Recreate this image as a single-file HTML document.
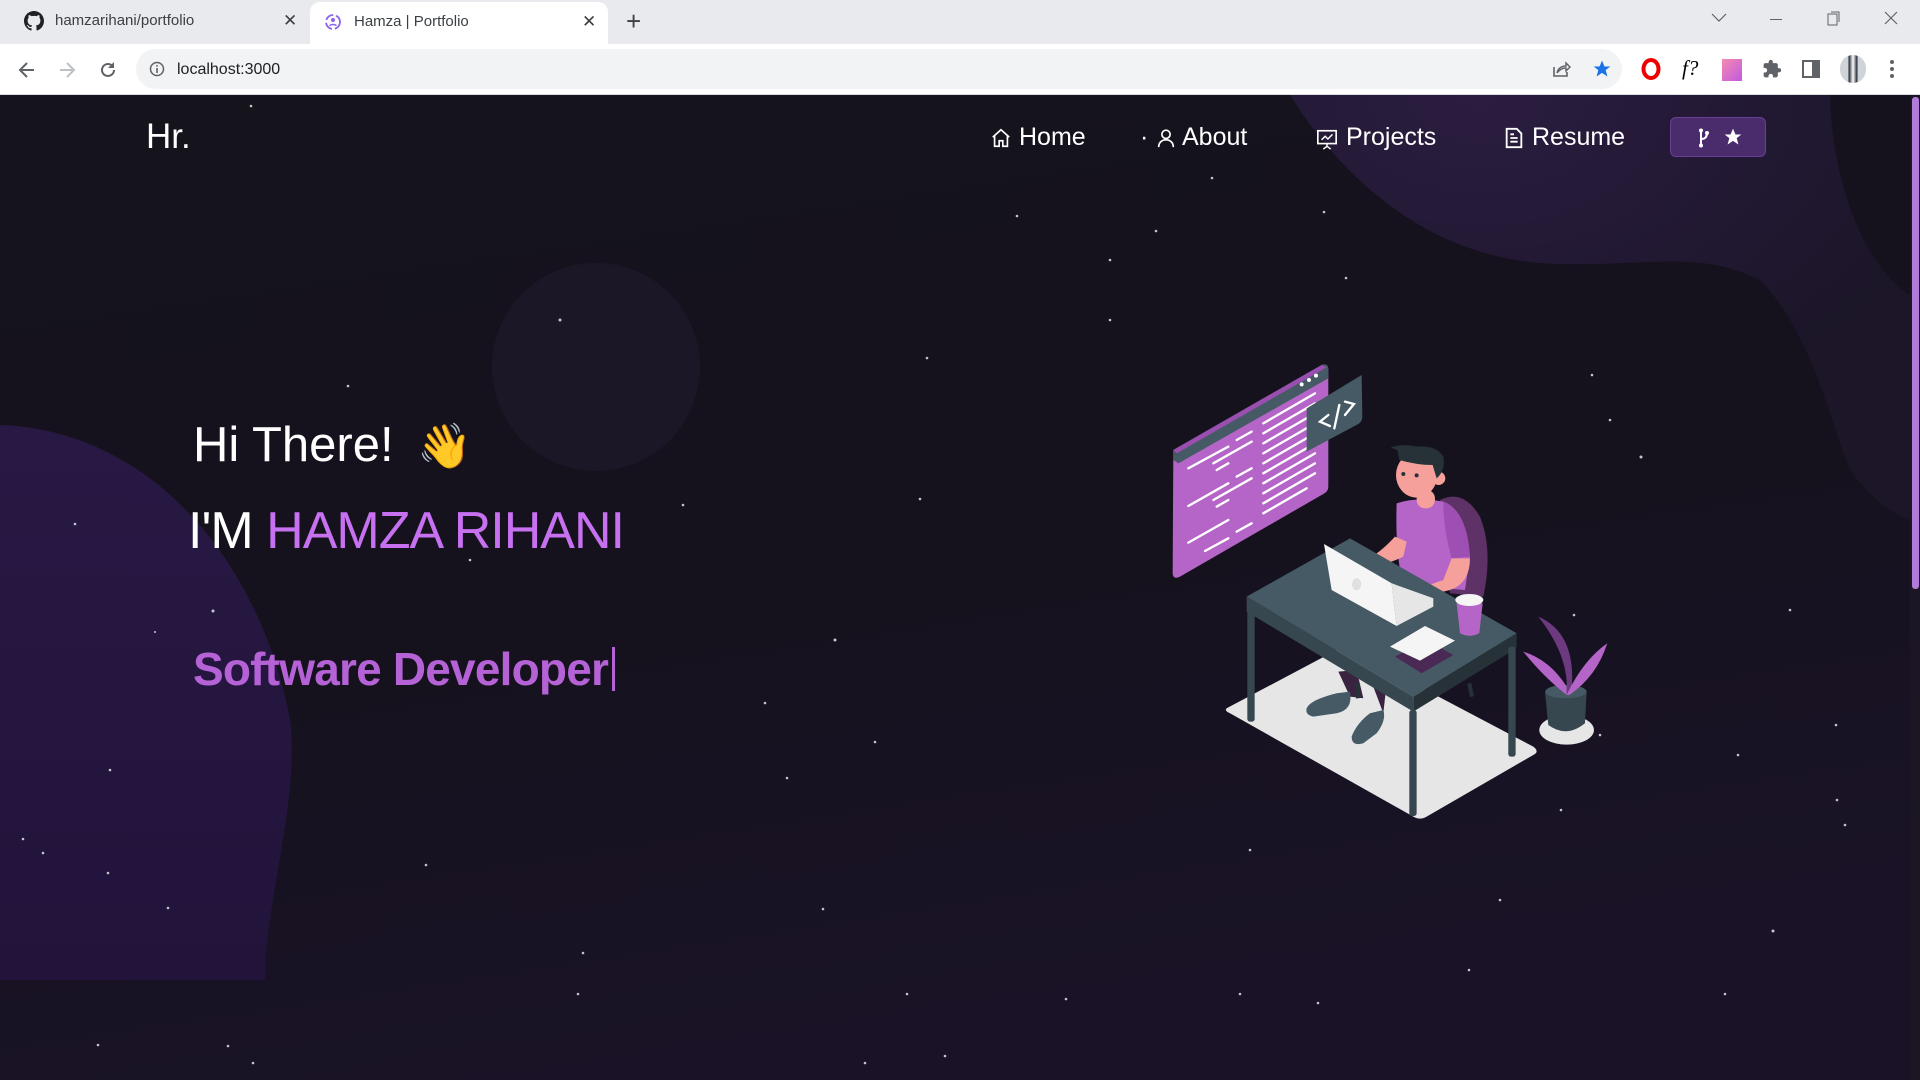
<!DOCTYPE html>
<html><head><meta charset="utf-8"><style>
*{margin:0;padding:0;box-sizing:border-box}
body{width:1920px;height:1080px;overflow:hidden;background:#14121b;font-family:"Liberation Sans",sans-serif;position:relative}
.tabs{position:absolute;left:0;top:0;width:1920px;height:44px;background:#e8eaed}
.tab{position:absolute;top:0;height:44px;font-size:15px;color:#3c4043;line-height:42px}
.toolbar{position:absolute;left:0;top:44px;width:1920px;height:51px;background:#fff;border-bottom:1px solid #dadce0}
.omni{position:absolute;left:136px;top:5px;width:1486px;height:40px;border-radius:20px;background:#f1f3f4}
.page{position:absolute;left:0;top:95px;width:1920px;height:985px;overflow:hidden}
.nav{position:absolute;color:#fff;font-size:25px;top:27px;height:30px;line-height:30px}
.nav svg{position:absolute;top:5px}
</style></head><body>
<div class="tabs">
 <div class="tab" style="left:20px;width:280px">
  <svg style="position:absolute;left:4px;top:11px" width="20" height="20" viewBox="0 0 16 16"><path fill="#202124" d="M8 0C3.58 0 0 3.58 0 8c0 3.54 2.290 6.53 5.47 7.59.4.07.55-.17.55-.38 0-.19-.01-.82-.01-1.49-2.01.37-2.530-.49-2.690-.94-.09-.23-.48-.94-.82-1.130-.28-.15-.68-.52-.01-.53.63-.01 1.080.58 1.230.82.72 1.210 1.870.87 2.330.66.07-.52.28-.87.51-1.07-1.780-.2-3.640-.89-3.640-3.950 0-.87.31-1.590.82-2.150-.08-.2-.36-1.020.08-2.120 0 0 .67-.21 2.2.82.64-.18 1.320-.27 2-.27.68 0 1.360.09 2 .27 1.530-1.040 2.2-.82 2.2-.82.44 1.1.16 1.920.08 2.120.51.56.82 1.270.82 2.150 0 3.070-1.870 3.750-3.650 3.950.29.25.54.73.54 1.480 0 1.070-.01 1.930-.01 2.2 0 .21.15.46.55.38A8.013 8.013 0 0016 8c0-4.42-3.58-8-8-8z"/></svg>
  <span style="position:absolute;left:35px">hamzarihani/portfolio</span>
  <span style="position:absolute;left:263px;font-size:17px">✕</span>
 </div>
 <div class="tab" style="left:310px;width:298px;top:2px;height:42px;background:#fff;border-radius:10px 10px 0 0;line-height:40px">
  <svg style="position:absolute;left:14px;top:11px" width="18" height="18" viewBox="0 0 18 18"><circle cx="9" cy="9" r="7" fill="none" stroke="#8a62f0" stroke-width="1.8" stroke-dasharray="9 3"/><circle cx="9" cy="7" r="2" fill="#8a62f0"/><path d="M6 13c0-2 6-2 6 0" stroke="#8a62f0" stroke-width="1.6" fill="none"/></svg>
  <span style="position:absolute;left:44px">Hamza | Portfolio</span>
  <span style="position:absolute;left:272px;font-size:17px">✕</span>
 </div>
 <div style="position:absolute;left:626px;top:6px;font-size:26px;color:#3c4043">+</div>
 <svg style="position:absolute;left:1711px;top:13px" width="16" height="10"><path d="M1 1l7 7 7-7" stroke="#5f6368" fill="none" stroke-width="1.2"/></svg>
 <div style="position:absolute;left:1770px;top:19px;width:12px;height:1px;background:#5f6368"></div>
 <svg style="position:absolute;left:1827px;top:11px" width="14" height="15"><rect x="1" y="3" width="9" height="11" fill="none" stroke="#5f6368"/><path d="M4 1h8v10" fill="none" stroke="#5f6368"/></svg>
 <svg style="position:absolute;left:1884px;top:11px" width="14" height="14"><path d="M1 1l12 12M13 1L1 13" stroke="#5f6368" stroke-width="1.2"/></svg>
</div>
<div class="toolbar">
 <svg style="position:absolute;left:17px;top:16px" width="20" height="20"><path d="M17 10H4M10 3l-7 7 7 7" stroke="#5f6368" stroke-width="2" fill="none"/></svg>
 <svg style="position:absolute;left:57px;top:16px" width="20" height="20"><path d="M3 10h13M10 3l7 7-7 7" stroke="#bdc1c6" stroke-width="2" fill="none"/></svg>
 <svg style="position:absolute;left:98px;top:16px" width="20" height="20"><path d="M16 10a6 6 0 1 1-2-4.5" stroke="#5f6368" stroke-width="2" fill="none"/><path d="M16 2v6h-6z" fill="#5f6368"/></svg>
 <div class="omni">
  <svg style="position:absolute;left:13px;top:12px" width="16" height="16"><circle cx="8" cy="8" r="6.5" fill="none" stroke="#5f6368" stroke-width="1.5"/><rect x="7.2" y="7" width="1.6" height="5" fill="#5f6368"/><rect x="7.2" y="4" width="1.6" height="1.6" fill="#5f6368"/></svg>
  <span style="position:absolute;left:41px;top:12px;font-size:16px;color:#202124">localhost:3000</span>
  <svg style="position:absolute;left:1415px;top:10px" width="20" height="20"><path d="M3 8v9h13v-4" stroke="#5f6368" stroke-width="1.6" fill="none"/><path d="M6 14c1-5 5-7 9-7V4l4 4-4 4V9c-3 0-6 1-9 5z" stroke="#5f6368" stroke-width="1.4" fill="none"/></svg>
  <svg style="position:absolute;left:1456px;top:10px" width="20" height="20" viewBox="0 0 24 24"><path fill="#1a73e8" d="M12 2l3 7h7l-5.6 4.4 2.1 7.6L12 16.6 5.5 21l2.1-7.6L2 9h7z"/></svg>
 </div>
 <svg style="position:absolute;left:1641px;top:14px" width="20" height="22"><ellipse cx="10" cy="11" rx="7.5" ry="9" fill="none" stroke="#e00" stroke-width="4"/></svg>
 <div style="position:absolute;left:1682px;top:12px;font-family:'Liberation Serif',serif;font-style:italic;font-size:21px;color:#000">f?</div>
 <div style="position:absolute;left:1722px;top:15px;width:20px;height:22px;background:linear-gradient(135deg,#f48ab0,#c05ae0)"></div>
 <svg style="position:absolute;left:1762px;top:15px" width="20" height="20" viewBox="0 0 24 24"><path fill="#5f6368" d="M20.5 11H19V7c0-1.1-.9-2-2-2h-4V3.5a2.5 2.5 0 0 0-5 0V5H4c-1.1 0-2 .9-2 2v3.8h1.5c1.5 0 2.7 1.2 2.7 2.7S5 16.2 3.5 16.2H2V20c0 1.1.9 2 2 2h3.8v-1.5c0-1.5 1.2-2.7 2.7-2.7s2.7 1.2 2.7 2.7V22H17c1.1 0 2-.9 2-2v-4h1.5a2.5 2.5 0 0 0 0-5z"/></svg>
 <svg style="position:absolute;left:1802px;top:16px" width="18" height="18"><rect x="1" y="1" width="16" height="16" fill="none" stroke="#5f6368" stroke-width="2"/><rect x="10" y="1" width="7" height="16" fill="#5f6368"/></svg>
 <div style="position:absolute;left:1840px;top:11px;width:26px;height:28px;border-radius:13px;background:linear-gradient(90deg,#cfd4d8 0,#cfd4d8 30%,#2c3440 35%,#fff 50%,#2c3440 65%,#cfd4d8 70%)"></div>
 <svg style="position:absolute;left:1888px;top:15px" width="8" height="20"><circle cx="4" cy="3" r="2" fill="#5f6368"/><circle cx="4" cy="10" r="2" fill="#5f6368"/><circle cx="4" cy="17" r="2" fill="#5f6368"/></svg>
</div>

<div class="page">
<svg style="position:absolute;left:0;top:0" width="1920" height="985" viewBox="0 95 1920 985">
 <defs>
  <linearGradient id="bg" x1="0" y1="0" x2="0.3" y2="1"><stop offset="0" stop-color="#15131c"/><stop offset="0.6" stop-color="#15121e"/><stop offset="1" stop-color="#1a1327"/></linearGradient>
  <radialGradient id="tr" cx="0.3" cy="0" r="0.8"><stop offset="0" stop-color="#2b1d40"/><stop offset="0.6" stop-color="#211832"/><stop offset="1" stop-color="#1c1628"/></radialGradient>
  <linearGradient id="lb" x1="0" y1="0" x2="0" y2="1"><stop offset="0" stop-color="#281944"/><stop offset="1" stop-color="#21133a"/></linearGradient>
 </defs>
 <rect x="0" y="95" width="1920" height="985" fill="url(#bg)"/>
 <path d="M1290 95 C1350 190 1440 262 1560 264 C1650 266 1700 250 1760 280 C1810 330 1830 420 1850 470 C1880 510 1905 520 1920 522 L1920 300 C1870 280 1832 190 1830 95Z" fill="url(#tr)"/>
 <circle cx="596" cy="367" r="104" fill="#1b1727"/>
 <path d="M0 425 C150 430 260 560 290 720 C300 800 265 900 265 980 L0 980Z" fill="url(#lb)"/>
 <g fill="#fff" opacity="0.75">
  <circle cx="251" cy="106" r="1.3"/><circle cx="1017" cy="216" r="1.3"/><circle cx="1156" cy="231" r="1.3"/><circle cx="1110" cy="260" r="1.3"/><circle cx="1212" cy="178" r="1.3"/><circle cx="560" cy="320" r="1.5"/><circle cx="927" cy="358" r="1.3"/><circle cx="348" cy="386" r="1.3"/><circle cx="1324" cy="212" r="1.3"/><circle cx="1346" cy="278" r="1.3"/><circle cx="1110" cy="320" r="1.3"/><circle cx="1592" cy="375" r="1.3"/><circle cx="1641" cy="457" r="1.5"/><circle cx="1574" cy="615" r="1.3"/><circle cx="1790" cy="610" r="1.3"/><circle cx="920" cy="499" r="1.3"/><circle cx="75" cy="524" r="1.3"/><circle cx="213" cy="611" r="1.5"/><circle cx="155" cy="632" r="1"/><circle cx="683" cy="505" r="1.3"/><circle cx="835" cy="640" r="1.5"/><circle cx="765" cy="703" r="1.3"/><circle cx="875" cy="742" r="1.3"/><circle cx="787" cy="778" r="1.3"/><circle cx="110" cy="770" r="1.3"/><circle cx="23" cy="839" r="1.3"/><circle cx="43" cy="853" r="1.3"/><circle cx="108" cy="873" r="1.3"/><circle cx="168" cy="908" r="1.3"/><circle cx="426" cy="865" r="1.3"/><circle cx="583" cy="953" r="1.3"/><circle cx="823" cy="909" r="1.3"/><circle cx="578" cy="994" r="1.3"/><circle cx="907" cy="994" r="1.3"/><circle cx="1469" cy="970" r="1.3"/><circle cx="1066" cy="999" r="1.3"/><circle cx="1240" cy="994" r="1.3"/><circle cx="1318" cy="1003" r="1.3"/><circle cx="1725" cy="994" r="1.3"/><circle cx="1773" cy="931" r="1.5"/><circle cx="1836" cy="725" r="1.3"/><circle cx="1738" cy="755" r="1.3"/><circle cx="1561" cy="810" r="1.3"/><circle cx="98" cy="1045" r="1.3"/><circle cx="228" cy="1046" r="1.3"/><circle cx="253" cy="1063" r="1.3"/><circle cx="945" cy="1056" r="1.3"/><circle cx="865" cy="1063" r="1.3"/><circle cx="1845" cy="825" r="1.3"/><circle cx="1837" cy="800" r="1.3"/><circle cx="1600" cy="735" r="1.3"/><circle cx="1560" cy="698" r="1.3"/><circle cx="1250" cy="850" r="1.3"/><circle cx="1500" cy="900" r="1.3"/><circle cx="1610" cy="420" r="1.3"/><circle cx="470" cy="560" r="1.3"/>
 </g>
 <g transform="translate(1150,350) scale(0.3333)">
  <path d="M230 1075 L560 900 Q580 890 600 900 L1150 1190 Q1170 1205 1150 1215 L830 1400 Q810 1412 790 1400 L240 1090 Q222 1082 230 1075Z" fill="#e6e6e6"/>
  <ellipse cx="1250" cy="1140" rx="82" ry="44" fill="#e6e6e6"/>
  <path d="M70 300 L515 45 Q535 38 535 60 L535 410 Q535 425 520 432 L90 680 Q68 690 68 670Z" fill="#b565c8"/>
  <path d="M70 300 L515 45 Q535 38 535 60 L535 85 L85 340 L70 330Z" fill="#455a64"/>
  <path d="M70 300 L515 45 L530 52 L80 310Z" fill="#9a4fb0"/>
  <g fill="#fff"><circle cx="455" cy="103" r="6"/><circle cx="477" cy="90" r="6"/><circle cx="498" cy="77" r="6"/></g>
  <g stroke="#fff" stroke-width="7" stroke-linecap="round">
   <path d="M115 355 L235 290M190 340 L305 275M200 360 L235 340M260 270 L305 245"/>
   <path d="M115 468 L235 400M190 450 L305 385M200 470 L235 450M260 380 L305 355"/>
   <path d="M115 578 L235 510M165 603 L235 565M260 545 L305 520"/>
   <path d="M340 220 L495 130M340 250 L495 160M340 280 L495 190M340 310 L495 220M340 340 L495 250M340 370 L495 280M340 400 L495 310M340 430 L495 340M340 460 L495 370M340 490 L470 415"/>
  </g>
  <path d="M470 175 L635 75 L637 200 Q637 215 625 222 L470 305Z" fill="#455a64"/>
  <path d="M535 195 L510 215 L540 228M553 235 L568 165M585 155 L612 162 L585 195" stroke="#fff" stroke-width="7" fill="none" stroke-linecap="round"/>
  <path d="M870 450 Q940 415 990 500 Q1030 600 1000 740 L900 730Z" fill="#5e3266"/>
  <path d="M958 1000 L966 1040" stroke="#263238" stroke-width="12"/>
  <path d="M565 965 L600 1040 L640 1045 L620 960Z" fill="#3a2340"/>
  <path d="M670 1010 L700 1090 L710 1000Z" fill="#3a2340"/>
  <path d="M470 1075 Q480 1050 560 1030 L600 1025 Q610 1080 560 1090 L490 1100 Q465 1095 470 1075Z" fill="#455a64"/>
  <path d="M605 1160 Q620 1120 660 1090 L700 1080 Q710 1110 680 1150 L640 1180 Q605 1190 605 1160Z" fill="#455a64"/>
  <path d="M620 1000 L625 1045" stroke="#263238" stroke-width="14"/>
  <path d="M740 460 Q800 440 880 455 Q950 480 960 620 L945 720 L760 705 Q735 610 740 460Z" fill="#b565c8"/>
  <path d="M880 455 Q950 480 960 620 L905 625 Q880 540 880 455Z" fill="#9d4fb3"/>
  <rect x="800" y="420" width="55" height="55" rx="25" fill="#f5a09b"/>
  <ellipse cx="800" cy="375" rx="62" ry="68" fill="#f5a09b"/>
  <circle cx="866" cy="385" r="20" fill="#f5a09b"/>
  <path d="M722 292 Q760 280 800 290 Q860 285 880 320 Q888 360 860 385 L848 345 Q800 345 748 330 L742 300Z" fill="#263238"/>
  <circle cx="760" cy="372" r="6" fill="#263238"/><circle cx="800" cy="376" r="6" fill="#263238"/>
  <path d="M735 560 L770 575 L760 620 Q720 640 665 650 L640 635 Q690 610 735 560Z" fill="#f5a09b"/>
  <path d="M905 625 L960 625 Q960 700 900 720 L800 745 L780 725 L880 690Z" fill="#f5a09b"/>
  <path d="M290 740 L600 565 L1100 850 L790 1040Z" fill="#455a64"/>
  <path d="M290 740 L790 1040 L790 1085 L290 785Z" fill="#37474f"/>
  <path d="M790 1040 L1100 850 L1100 895 L790 1085Z" fill="#263238"/>
  <rect x="292" y="780" width="22" height="335" rx="8" fill="#37474f"/>
  <rect x="778" y="1080" width="22" height="318" rx="8" fill="#37474f"/>
  <rect x="1075" y="890" width="22" height="330" rx="8" fill="#37474f"/>
  <path d="M522 582 L725 700 L740 828 L545 720Z" fill="#f5f5f5"/>
  <ellipse cx="620" cy="703" rx="14" ry="18" fill="#e0e0e0"/>
  <path d="M725 700 L850 745 L850 770 L740 828Z" fill="#e6e6e6"/>
  <path d="M920 760 L998 760 L988 850 Q958 865 930 850Z" fill="#b565c8"/>
  <ellipse cx="958" cy="750" rx="42" ry="18" fill="#f5f5f5"/>
  <path d="M735 920 L830 870 L910 915 L815 970Z" fill="#4a2a55"/>
  <path d="M720 890 L825 828 L915 872 L810 932Z" fill="#f5f5f5"/>
  <path d="M1185 1025 Q1250 1000 1310 1025 L1305 1120 Q1250 1165 1195 1125Z" fill="#37474f"/>
  <ellipse cx="1248" cy="1025" rx="62" ry="20" fill="#455a64"/>
  <path d="M1250 1035 Q1180 980 1120 905 Q1200 930 1250 1010Z" fill="#b565c8"/>
  <path d="M1250 1035 Q1260 920 1165 800 Q1280 850 1265 1020Z" fill="#6d3a80"/>
  <path d="M1250 1035 Q1300 930 1372 880 Q1340 980 1258 1035Z" fill="#b565c8"/>
 </g>
 <rect x="1910" y="95" width="10" height="985" fill="#1b1524"/>
 <rect x="1912" y="97" width="7" height="492" rx="3" fill="#b07ad8"/>
</svg>

<div style="position:absolute;left:146px;top:22px;color:#fff;font-size:35px">Hr.</div>

<div class="nav" style="left:990px">
 <svg style="left:0" width="22" height="22" viewBox="0 0 24 24"><path d="M3 11L12 3l9 8M5 9v12h5v-6h4v6h5V9" stroke="#fff" stroke-width="1.8" fill="none"/></svg>
 <span style="margin-left:29px">Home</span></div>
<div class="nav" style="left:1140px"><span style="position:absolute;left:0;top:0">·</span>
 <svg style="left:15px" width="22" height="22" viewBox="0 0 24 24"><circle cx="12" cy="8" r="4.5" stroke="#fff" stroke-width="1.8" fill="none"/><path d="M4 22c0-5 3.5-8 8-8s8 3 8 8" stroke="#fff" stroke-width="1.8" fill="none"/></svg>
 <span style="margin-left:42px">About</span></div>
<div class="nav" style="left:1316px">
 <svg style="left:0" width="22" height="24" viewBox="0 0 24 24"><rect x="2" y="3" width="20" height="14" stroke="#fff" stroke-width="1.8" fill="none"/><path d="M6 13l4-4 3 3 5-5M12 17v4M8 23l4-3 4 3" stroke="#fff" stroke-width="1.6" fill="none"/></svg>
 <span style="margin-left:30px">Projects</span></div>
<div class="nav" style="left:1504px">
 <svg style="left:0" width="20" height="22" viewBox="0 0 20 24"><path d="M2 2h11l5 5v15H2z" stroke="#fff" stroke-width="2" fill="none"/><path d="M6 12h8M6 16h8M6 8h4" stroke="#fff" stroke-width="2"/></svg>
 <span style="margin-left:28px">Resume</span></div>
<div style="position:absolute;left:1670px;top:22px;width:96px;height:40px;background:#4a2c6c;border:1px solid #6a3f94;border-radius:6px">
 <svg style="position:absolute;left:27px;top:10px" width="12" height="20" viewBox="0 0 12 20"><path d="M3 2v16M3 11c5 0 6-3 6-6" stroke="#fff" stroke-width="2" fill="none"/><circle cx="3" cy="2.5" r="2" fill="#fff"/><circle cx="3" cy="17.5" r="2" fill="#fff"/><circle cx="9" cy="5" r="2" fill="#fff"/></svg>
 <svg style="position:absolute;left:52px;top:9px" width="20" height="20" viewBox="0 0 24 24"><path fill="#fff" d="M12 2l3 7h7l-5.6 4.4 2.1 7.6L12 16.6 5.5 21l2.1-7.6L2 9h7z"/></svg>
</div>

<div style="position:absolute;left:193px;top:320px;color:#fff;font-size:49px;line-height:60px;white-space:nowrap">Hi There! <span style="font-size:44px;margin-left:10px">👋</span></div>
<div style="position:absolute;left:188px;top:404px;color:#fff;font-size:52px;line-height:64px;white-space:nowrap;letter-spacing:-1px">I'M <span style="color:#c770f0">HAMZA RIHANI</span></div>
<div style="position:absolute;left:193px;top:546px;color:#b562d6;font-size:46px;font-weight:bold;line-height:56px;white-space:nowrap;letter-spacing:-0.8px">Software Developer<span style="display:inline-block;width:3px;height:44px;background:#b562d6;margin-left:4px;vertical-align:-6px"></span></div>
</div>
</body></html>
